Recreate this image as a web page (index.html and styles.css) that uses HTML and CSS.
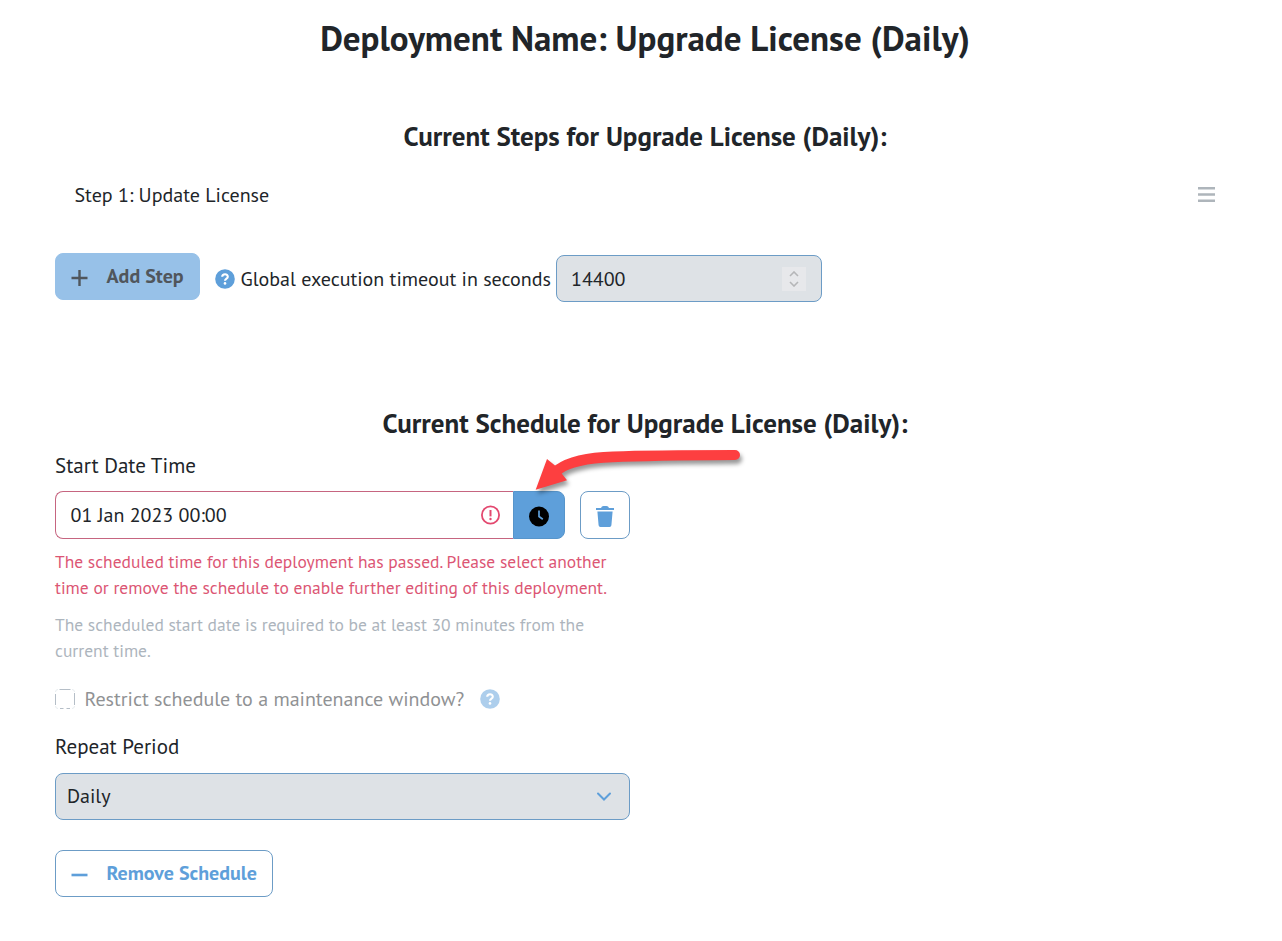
FILE: index.html
```html
<!DOCTYPE html>
<html lang="en">
<head>
<meta charset="utf-8">
<title>Deployment: Upgrade License (Daily)</title>
<link rel="stylesheet" href="styles.css">
</head>
<body>
<svg class="sprite" aria-hidden="true">
  <symbol id="help" viewBox="0 0 20 20">
    <circle cx="10" cy="10" r="9.8" fill="#5e9fda"/>
    <path d="M7.2 7.8C7.3 4.5 12.8 4.5 12.8 7.7C12.8 9.7 10 9.5 10 11.7" fill="none" stroke="#fff" stroke-width="2.1"/>
    <circle cx="10" cy="14.4" r="1.3" fill="#fff"/>
  </symbol>
</svg>
<main class="page">
  <h1 class="title">Deployment Name: Upgrade License (Daily)</h1>

  <section class="steps">
    <h2 class="subtitle">Current Steps for Upgrade License (Daily):</h2>
    <div class="step">
      <span>Step 1: Update License</span>
      <svg class="grip" width="18" height="17" viewBox="0 0 18 17"><path d="M0 2.2H17M0 8.5H17M0 14.7H17" stroke="#aeb5bb" stroke-width="2.6"/></svg>
    </div>
    <div class="toolbar">
      <button class="btn btn-add" disabled>
        <svg width="18" height="18" viewBox="0 0 18 18"><path d="M.5 9H16.500M8.500 1V17" stroke="#50565c" stroke-width="2.4"/></svg>
        <span>Add Step</span>
      </button>
      <svg class="help" width="20" height="20"><use href="#help"/></svg>
      <span class="timeout-label">Global execution timeout in seconds</span>
      <div class="number">
        <span>14400</span>
        <span class="spinner"><svg width="12" height="16" viewBox="0 0 12 16"><path d="M2 5L6 1L10 5M2 11L6 15L10 11" fill="none" stroke="#b5b6b8" stroke-width="1.6"/></svg></span>
      </div>
    </div>
  </section>

  <section class="schedule">
    <h2 class="subtitle">Current Schedule for Upgrade License (Daily):</h2>
    <div class="form">
      <div class="label start">Start Date Time</div>
      <div class="date-row">
        <div class="date">
          <span>01 Jan 2023 00:00</span>
          <svg width="20" height="20" viewBox="0 0 20 20"><circle cx="10.500" cy="10" r="8.6" fill="none" stroke="#e3486f" stroke-width="1.8"/><path d="M10.500 5V11.4" stroke="#e3486f" stroke-width="2"/><circle cx="10.500" cy="14" r="1.2" fill="#e3486f"/></svg>
        </div>
        <button class="clock">
          <svg width="20" height="20" viewBox="0 0 20 20"><circle cx="10" cy="9.500" r="10"/><path d="M10 3.500V9.500L13.8 12.3" fill="none" stroke="#5e9fda" stroke-width="1.7"/></svg>
        </button>
        <button class="trash">
          <svg width="18" height="21" viewBox="0 0 18 21" fill="#5e9fda"><path d="M0 2H5Q5.6 0 7.500 0H10.500Q12.4 0 13 2H18V4H0ZM1.4 5.4H16.600L15.4 19.2Q15.2 21 13.6 21H4.4Q2.8 21 2.6 19.2Z"/></svg>
        </button>
      </div>
      <p class="error">The scheduled time for this deployment has passed. Please select another<br>time or remove the schedule to enable further editing of this deployment.</p>
      <p class="hint">The scheduled start date is required to be at least 30 minutes from the<br>current time.</p>
      <div class="restrict">
        <svg class="check" width="20" height="20" viewBox="0 0 20 20"><path d="M4.500 .5H15.500M5 19.500H8.500M11.500 19.500H15M.5 5V16M19.500 4V16" fill="none" stroke="#b5bec7"/><path d="M.5 3Q.5 .5 3 .5M17 .5Q19.500 .5 19.500 3M19.500 17Q19.500 19.500 17 19.500M3 19.500Q.5 19.500 .5 17" fill="none" stroke="#e8ecef"/></svg>
        <span>Restrict schedule to a maintenance window?</span>
        <svg class="help-dim" width="20" height="20"><use href="#help"/></svg>
      </div>
      <div class="label period">Repeat Period</div>
      <div class="select">
        <span>Daily</span>
        <svg width="16" height="10" viewBox="0 0 16 10"><path d="M2 2.500L8 8.500L14 2.500" fill="none" stroke="#5e9fda" stroke-width="2" stroke-linecap="round"/></svg>
      </div>
      <button class="btn btn-remove">
        <svg width="18" height="18" viewBox="0 0 18 18"><path d="M.5 11H16.500" stroke="#5e9fda" stroke-width="2.6"/></svg>
        <span>Remove Schedule</span>
      </button>
    </div>
  </section>
  <svg class="arrow" width="260" height="64" viewBox="0 0 260 64">
    <path d="M235 10Q150 10 113 11.500Q73 12.500 55 25.500L47 19L35.700 49.700L67 40.300L61.700 33.500Q74 24 113 22.300Q150 20.500 235 20A5 5 0 0 0 235 10Z" fill="#fd3f40"/>
  </svg>
</main>
</body>
</html>
```

FILE: styles.css
```css
* { box-sizing: border-box; }
body {
  margin: 0;
  background: #fff;
  color: #212529;
  font: 20px/30px "PT Sans", Lato, "Noto Sans", sans-serif;
  white-space: nowrap;
}
.sprite { display: none; }
svg { display: block; flex: none; }
button { font: inherit; padding: 0; margin: 0; }
.page { position: relative; height: 941px; padding: 16px 47px 0 55px; overflow: hidden; }
.title, .subtitle { margin: 0; text-align: center; font-weight: 700; }
.title { font-size: 35px; line-height: 44px; }
.subtitle { font-size: 27px; line-height: 34px; }
.steps { padding-top: 59px; }
.step { display: flex; align-items: center; justify-content: space-between; height: 48px; margin-top: 18px; padding: 0 19px 0 19.5px; }
.grip { margin-bottom: 2px; }
.toolbar { display: flex; align-items: center; height: 50px; margin-top: 34px; }
.btn { display: flex; align-items: center; height: 47px; padding-left: 16px; border: 1px solid #6c9cc6; border-radius: 8px; font-weight: 700; }
.btn svg { margin-right: 17.5px; }
.btn-add { width: 145px; margin-top: -4px; background: #97c1e8; border-color: #97c1e8; color: #50565c; padding-left: 15px; }
.btn-add svg { margin-top: 4px; }
.help { margin-left: 15px; margin-right: 5.5px; margin-top: 1px; }
.timeout-label { width: 315.5px; padding-top: 2px; }
.number { display: flex; align-items: center; justify-content: space-between; width: 266px; height: 47px; margin-top: 1px; padding: 0 15px 0 14px; background: #dee2e6; border: 1px solid #6c9cc6; border-radius: 8px; }
.spinner { display: grid; place-items: center; width: 24px; height: 24px; background: #e7e8eb; }
.schedule { padding-top: 103px; }
.form { width: 575px; }
.label { margin-top: 10px; height: 30px; font-size: 21px; }
.start { margin-top: 11px; margin-bottom: -1px; }
.date-row { display: flex; margin-top: 11px; height: 48px; }
.start + .date-row { margin-top: 10px; }
.start { margin-bottom: 0; }
.date { display: flex; align-items: center; justify-content: space-between; width: 458px; padding: 0 13px 0 14.5px; border: 1px solid #c66580; border-right: 0; border-radius: 8px 0 0 8px; }
.clock { display: grid; place-items: center; width: 52px; border: 1px solid #5795cb; border-radius: 0 8px 8px 0; background: #5e9fda; padding-top: 3px; }
.clock svg { overflow: visible; }
.trash { display: grid; place-items: center; width: 50px; margin-left: 15px; padding-top: 3px; border: 1px solid #6c9cc6; border-radius: 8px; background: #fff; }
.error, .hint { margin: 10px 0 0; font-size: 17.5px; line-height: 26px; }
.error { color: #dc5674; }
.hint { margin-top: 11px; color: #adb5bd; }
.restrict { display: flex; align-items: center; height: 30px; margin-top: 20px; color: #909294; }
.check { margin-right: 9.5px; }
.help-dim { margin-left: auto; margin-right: 130px; opacity: .5; }
.period { margin-top: 18px; }
.select { display: flex; align-items: center; justify-content: space-between; height: 47px; margin-top: 11px; padding: 0 17px 1px 11px; background: #dee2e6; border: 1px solid #6c9cc6; border-radius: 8px; }
.btn-remove { width: 218px; margin-top: 30px; background: #fff; color: #5e9fda; padding: 0 0 1px 15px; }
.arrow { position: absolute; left: 500px; top: 440px; filter: drop-shadow(2px 4px 2px rgba(0, 0, 0, .4)); }
```
